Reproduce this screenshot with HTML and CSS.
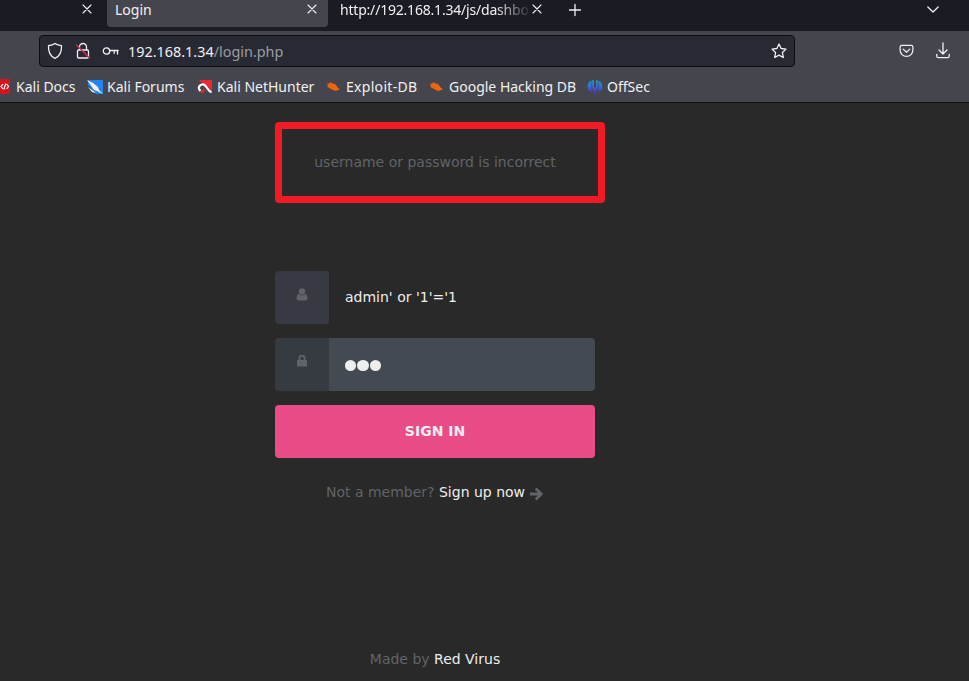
FILE: index.html
```html
<!DOCTYPE html>
<html lang="en">
<head>
<meta charset="utf-8">
<title>Login</title>
<link rel="stylesheet" href="styles.css">
</head>
<body>
<header class="chrome">
  <div class="tabs">
    <div class="tab tab-first"><svg class="close" viewBox="0 0 10 10"><path d="M1 1l8 8M9 1l-8 8"/></svg></div>
    <div class="tab tab-active"><span>Login</span><svg class="close" viewBox="0 0 10 10"><path d="M1 1l8 8M9 1l-8 8"/></svg></div>
    <div class="tab tab-last"><span class="fade">http://192.168.1.34/js/dashbo</span><svg class="close" viewBox="0 0 10 10"><path d="M1 1l8 8M9 1l-8 8"/></svg></div>
    <svg class="plus" viewBox="0 0 12 12"><path d="M6 .5v11M.5 6h11"/></svg>
    <svg class="chevron" viewBox="0 0 14 8"><path d="M1 1l6 6 6-6"/></svg>
  </div>
  <nav class="toolbar">
    <div class="urlbar">
      <svg class="shield" viewBox="0 0 16 18"><path d="M8 1.400c2 1.500 4.200 2 6.500 2.300 .3 5.800-1.300 10.300-6.500 12.600C2.800 14 1.200 9.500 1.500 3.700 3.800 3.400 6 2.900 8 1.400z"/></svg>
      <svg class="insecure" viewBox="0 0 16 18"><path d="M4.500 8V5a3.500 3.500 0 0 1 7 0v3M2.500 9.200q0-1.200 1.200-1.200h8.600q1.200 0 1.200 1.200v5.600q0 1.200-1.200 1.200H3.700q-1.200 0-1.200-1.200z"/><path class="slash" d="M1.500 3l13 13"/></svg>
      <svg class="key" viewBox="0 0 17 10"><circle cx="4.500" cy="5" r="3.200"/><path d="M7.700 4.500h8.500M12.200 4.500v2.800M15.500 4.500V8"/></svg>
      <span class="url">192.168.1.34<span>/login.php</span></span>
      <svg class="star" viewBox="0 0 16 16"><path d="M8 1l2.100 4.500 4.900.6-3.600 3.400.9 5L8 12.100l-4.300 2.400.9-5L1 6.100l4.900-.6z"/></svg>
    </div>
    <svg class="pocket" viewBox="0 0 16 14"><path d="M3 1h10q1.800 0 1.800 1.800V6a6.800 6.800 0 0 1-13.600 0V2.800Q1.200 1 3 1zM4.500 5L8 8.300 11.500 5"/></svg>
    <svg class="download" viewBox="0 0 14 16"><path d="M7 0v10.500M3 7l4 4 4-4M.8 11.500v1.700q0 1.500 1.500 1.500h9.400q1.500 0 1.500-1.500v-1.700"/></svg>
  </nav>
  <div class="bookmarks">
    <a class="bm docs"><svg viewBox="0 0 16 16"><path fill="#d8131b" d="M1 0h14v15H1z"/><path fill="none" stroke="#fff" stroke-width="1.200" d="M8 5L6 7.500 8 10M11.500 5l2 2.500-2 2.500M10.800 4.500L8.800 10.500"/></svg>Kali Docs</a>
    <a class="bm forums"><svg viewBox="0 0 16 16"><path fill="#2484ef" d="M1 1h15v14H1z"/><path fill="#45464d" d="M0 5l9 10H0z"/><path fill="#f5f5f5" d="M0 1l6 3 5 4 1 3 4 4-6-3-3-1-2-3zM1 8l8 6-4-1z"/></svg>Kali Forums</a>
    <a class="bm nethunter"><svg viewBox="0 0 16 16"><path fill="#eb2734" d="M2 1h13v13L8 8z"/><path fill="none" stroke="#fff" stroke-width="2.200" d="M3.500 12C-.2 8.500 3 5.300 6 5.300c3.500 0 4 6.500 8.500 8"/><path fill="none" stroke="#eb2734" stroke-width="2" d="M3.500 13q3-.2 4-2.500"/></svg>Kali NetHunter</a>
    <a class="bm exploit"><svg viewBox="0 0 16 16"><path fill="#f2640c" d="M1 4.500l2 .3L4.500 3 6 4.300 9 5l2 2.500 1 1.500 1.800 1-1 1-1.500.2-1.300.8-3-1-2-1L2.500 8.500 1 7.500l1-1z"/></svg>Exploit-DB</a>
    <a class="bm ghdb"><svg viewBox="0 0 16 16"><path fill="#f2640c" d="M1 4.500l2 .3L4.500 3 6 4.300 9 5l2 2.500 1 1.500 1.800 1-1 1-1.500.2-1.300.8-3-1-2-1L2.500 8.500 1 7.500l1-1z"/></svg>Google Hacking DB</a>
    <a class="bm offsec"><svg viewBox="0 0 16 16"><defs><linearGradient id="os" gradientUnits="userSpaceOnUse" x1="0" y1="1" x2="0" y2="13"><stop stop-color="#12a4cc"/><stop offset="1" stop-color="#513ad8"/></linearGradient></defs><path fill="url(#os)" d="M4.500 1.500v11.500C-.8 11-.8 4 4.500 1.500zM11.500 1.500v11.500C16.800 11 16.800 4 11.500 1.500zM5.200 1.200Q7 .5 7 2.500V12Q5.200 11 5.200 8zM10.800 1.200Q9 .5 9 2.500V12q1.800-1 1.800-4zM7.300 8h1.400v7H7.300z"/></svg>OffSec</a>
  </div>
</header>
<main class="page">
  <div class="alert">username or password is incorrect</div>
  <form class="login">
    <div class="field user">
      <span class="icon"><svg viewBox="0 0 12 13"><circle cx="6" cy="3.500" r="3.200"/><path d="M2.800 6Q6 8.800 9.200 6 11.500 6.800 11.500 10.500q0 2-1.800 2H2.300q-1.800 0-1.800-2Q.5 6.800 2.800 6z"/></svg></span>
      <span class="value">admin' or '1'='1</span>
    </div>
    <div class="field pass">
      <span class="icon"><svg viewBox="0 0 12 13"><path fill-rule="evenodd" d="M2.500 6V4.200a3.500 3.500 0 0 1 7 0V6h.8q.7 0 .7.700v5q0 .8-.7.800H1.700q-.7 0-.7-.8v-5Q1 6 1.700 6zM4.300 6h3.400V4.200a1.700 1.700 0 0 0-3.400 0z"/></svg></span>
      <span class="value dots"><i></i><i></i><i></i></span>
    </div>
    <button class="submit" type="button">SIGN IN</button>
  </form>
  <p class="signup">Not a member? <a>Sign up now</a><svg viewBox="0 0 13 14"><path d="M0 7h10.500M5.800 1.500L11.300 7l-5.500 5.500"/></svg></p>
  <p class="credit">Made by <a>Red Virus</a></p>
</main>
</body>
</html>
```
FILE: styles.css
```css
* { box-sizing: border-box; }
body {
  margin: 0;
  height: 681px;
  overflow: hidden;
  background: #292929;
  font: 14px/20px "DejaVu Sans", sans-serif;
  color: #606468;
}
.chrome {
  height: 103px;
  background: #45464d;
  border-bottom: 1px solid #111113;
  font: 14px/20px "Noto Sans", sans-serif;
  color: #f0f0f2;
}
.chrome svg { flex: none; overflow: visible; }
.tabs svg, .toolbar svg {
  fill: none;
  stroke: #f0f0f4;
  stroke-width: 1.3;
  stroke-linecap: round;
  stroke-linejoin: round;
}
.tabs { display: flex; height: 31px; background: #1b1b23; }
.tab { display: flex; height: 27px; white-space: nowrap; }
.tab .close { width: 10px; height: 10px; margin: 4px 0 0 auto; stroke-width: 1.1; }
.tab-first { width: 92px; }
.tab-active {
  width: 221px;
  margin-left: 15px;
  padding: 0 11px 0 8px;
  background: #45464d;
  border-radius: 0 0 4px 4px;
}
.tab-last { width: 214px; padding-left: 12px; }
.fade {
  width: 190px;
  letter-spacing: -0.2px;
  -webkit-mask-image: linear-gradient(90deg, #000 155px, transparent 192px);
  mask-image: linear-gradient(90deg, #000 155px, transparent 192px);
}
.tabs .plus { width: 12px; height: 12px; margin: 4px 0 0 26.5px; }
.tabs .chevron { width: 12px; height: 7px; margin: 6px 30px 0 auto; stroke-width: 1.5; }
.toolbar { display: flex; height: 40px; padding: 4px 19px 0 39px; }
.urlbar {
  display: flex;
  align-items: center;
  width: 756px;
  height: 32px;
  padding: 0 7px;
  background: #282a33;
  border: 1px solid #0c0c14;
  border-radius: 4px;
}
.shield { width: 16px; height: 18px; }
.insecure { width: 16px; height: 18px; margin-left: 12px; }
.toolbar .slash { stroke: #e22850; }
.key { width: 17px; height: 10px; margin-left: 11px; }
.url { margin-left: 9px; padding-top: 2px; font-size: 14.4px; }
.url span { color: #9b9ba1; }
.star { width: 16px; height: 16px; margin-left: auto; }
.pocket { width: 15px; height: 14px; margin: 9px 0 0 104px; }
.download { width: 14px; height: 16px; margin: 8px 0 0 auto; }
.bookmarks { display: flex; height: 31px; padding-top: 6px; }
.bm { display: flex; white-space: nowrap; }
.bm svg { width: 16px; height: 16px; margin: 2px 4px 0 0; }
.docs { width: 92px; margin-left: -5px; }
.docs svg { margin-right: 5px; }
.forums { width: 110px; }
.nethunter { width: 129px; }
.exploit { width: 103px; letter-spacing: 0.3px; }
.ghdb { width: 158px; }
.page { display: flex; flex-direction: column; width: 320px; margin: 19px 0 0 275px; }
.alert {
  width: 330px;
  height: 81px;
  padding: 24px 10px 0 0;
  border: 7px solid #f01b24;
  border-radius: 4px;
  text-align: center;
  line-height: 19px;
}
.login { display: grid; gap: 14px; margin-top: 68px; }
.field { display: flex; height: 53px; border-radius: 4px; overflow: hidden; color: #eee; }
.icon {
  display: flex;
  justify-content: center;
  width: 54px;
  padding-top: 17px;
  background: #363b41;
}
.user .icon { border-radius: 4px 2px 2px 4px; background: #373a43; }
.pass .icon { padding-top: 16px; }
.icon svg { width: 12px; height: 13px; fill: #606468; }
.value { display: flex; flex: 1; align-items: center; padding: 0 0 2px 16px; }
.pass .value { background: #434a52; }
.dots { gap: 1px; }
.dots i { width: 11.3px; height: 11px; margin-top: 3px; border-radius: 50%; background: #eee; }
.submit {
  height: 53px;
  padding: 0 0 2px;
  border: 0;
  border-radius: 4px;
  background: #ea4c88;
  color: #eee;
  font: bold 14px/20px "DejaVu Sans", sans-serif;
}
.signup { display: flex; justify-content: center; margin: 24px 0 0 -1px; white-space: pre; }
.signup svg { width: 13px; height: 14px; margin: 5px 0 0 5px; fill: none; stroke: #606468; stroke-width: 2.8; }
.signup a, .credit a { color: #eee; }
.credit { margin: 147px 0 0; text-align: center; }
```
